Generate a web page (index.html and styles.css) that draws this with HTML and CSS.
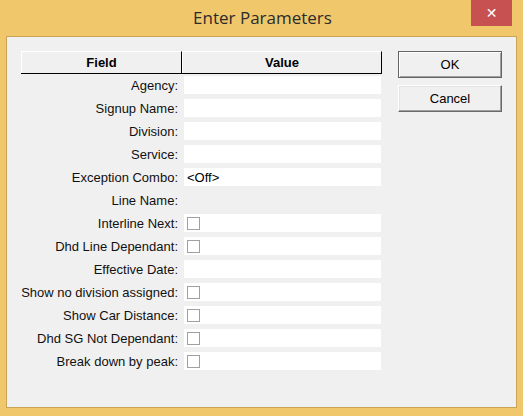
FILE: index.html
```html
<!DOCTYPE html>
<html lang="en">

<head>
    <meta charset="UTF-8" />
    <title>Enter Parameters</title>
    <link rel="stylesheet" href="styles.css">
</head>

<body>
    <div class="ventana">
        <div class="barra-titulo">
            <span class="titulo">Enter Parameters</span>
            <span class="cerrar">&#x2715;</span>
        </div>
        <div class="cliente">
            <div class="tabla">
                <div class="cabecera">
                    <div class="col-campo">Field</div>
                    <div class="col-valor">Value</div>
                </div>
                <div class="fila"><div class="etiqueta">Agency:</div><div class="valor"></div></div>
                <div class="fila"><div class="etiqueta">Signup Name:</div><div class="valor"></div></div>
                <div class="fila"><div class="etiqueta">Division:</div><div class="valor"></div></div>
                <div class="fila"><div class="etiqueta">Service:</div><div class="valor"></div></div>
                <div class="fila"><div class="etiqueta">Exception Combo:</div><div class="valor">&lt;Off&gt;</div></div>
                <div class="fila"><div class="etiqueta">Line Name:</div><div class="valor vacio"></div></div>
                <div class="fila"><div class="etiqueta">Interline Next:</div><div class="valor"><span class="check"></span></div></div>
                <div class="fila"><div class="etiqueta">Dhd Line Dependant:</div><div class="valor"><span class="check"></span></div></div>
                <div class="fila"><div class="etiqueta">Effective Date:</div><div class="valor"></div></div>
                <div class="fila"><div class="etiqueta">Show no division assigned:</div><div class="valor"><span class="check"></span></div></div>
                <div class="fila"><div class="etiqueta">Show Car Distance:</div><div class="valor"><span class="check"></span></div></div>
                <div class="fila"><div class="etiqueta">Dhd SG Not Dependant:</div><div class="valor"><span class="check"></span></div></div>
                <div class="fila"><div class="etiqueta">Break down by peak:</div><div class="valor"><span class="check"></span></div></div>
            </div>
            <div class="botones">
                <button class="boton boton-defecto">OK</button>
                <button class="boton">Cancel</button>
            </div>
        </div>
    </div>
</body>

</html>
```

FILE: styles.css
```css
body {
    margin: 0;
    font-family: "Liberation Sans", Arial, sans-serif;
    font-size: 13px;
    color: #000;
}

.ventana {
    width: 523px;
    height: 416px;
    background-color: #f0c86b;
    box-sizing: border-box;
    padding: 0 6px 8px 6px;
    display: flex;
    flex-direction: column;
}

.barra-titulo {
    height: 36px;
    position: relative;
    display: flex;
    justify-content: center;
    align-items: center;
}

.titulo {
    font-family: "Open Sans", "Noto Sans", sans-serif;
    font-size: 17px;
    color: #2b2b2b;
    margin-top: -1px;
    margin-left: 2px;
}

.cerrar {
    position: absolute;
    top: 0;
    right: 5px;
    width: 41px;
    height: 26px;
    background-color: #c75050;
    color: #fff;
    font-size: 14px;
    font-weight: bold;
    display: flex;
    justify-content: center;
    align-items: center;
    font-family: "DejaVu Sans", sans-serif;
}

.cliente {
    flex: 1;
    background-color: #f0f0f0;
    border: 1px solid #c9a457;
    display: flex;
    padding: 14px 0 0 14px;
}

.tabla {
    width: 361px;
}

.cabecera {
    display: flex;
    height: 22px;
    border-bottom: 1px solid #000;
    font-weight: bold;
    margin-bottom: 2px;
}

.col-campo,
.col-valor {
    display: flex;
    justify-content: center;
    align-items: center;
    border-top: 1px solid #fff;
    border-left: 1px solid #fff;
    border-right: 1px solid #000;
    box-sizing: border-box;
}

.col-campo {
    width: 161px;
}

.col-valor {
    width: 200px;
}

.fila {
    display: flex;
    height: 18px;
    margin-bottom: 5px;
    align-items: center;
}

.etiqueta {
    width: 157px;
    text-align: right;
    color: #111;
}

.valor {
    margin-left: 6px;
    width: 197px;
    height: 18px;
    background-color: #fff;
    display: flex;
    align-items: center;
    padding-left: 3px;
    box-sizing: border-box;
}

.valor.vacio {
    background-color: transparent;
}

.check {
    width: 13px;
    height: 13px;
    border: 1px solid #a0a0a0;
    box-sizing: border-box;
    background-color: #fff;
}

.botones {
    margin-left: 16px;
    display: flex;
    flex-direction: column;
    gap: 7px;
}

.boton {
    width: 104px;
    height: 27px;
    font-family: "Liberation Sans", Arial, sans-serif;
    font-size: 13px;
    background-color: #f0f0f0;
    border: 1px solid;
    border-color: #fff #696969 #696969 #fff;
    box-shadow: inset -1px -1px #a0a0a0, inset 1px 1px #e3e3e3;
    padding: 0;
}

.boton-defecto {
    border: 1px solid #646464;
    box-shadow: inset 1px 1px #fff, inset -1px -1px #a0a0a0;
}
```
